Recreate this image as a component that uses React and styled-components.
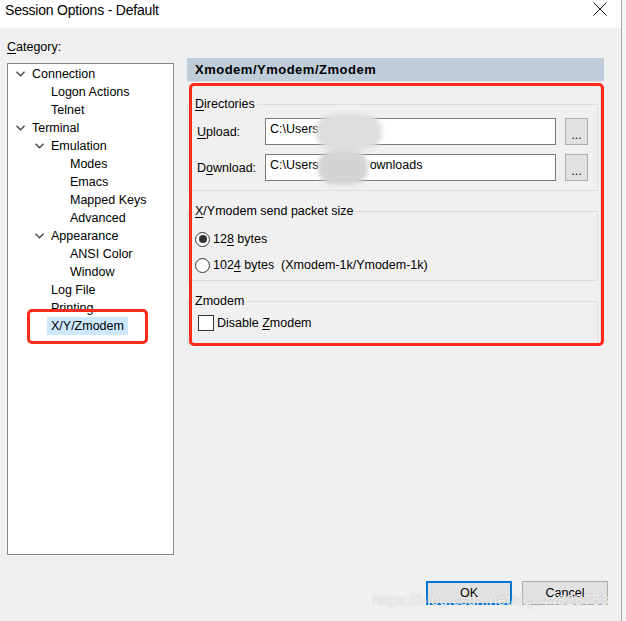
import React from 'react'
import styled, { createGlobalStyle } from 'styled-components'

const GlobalStyle = createGlobalStyle`
  html, body {
    margin: 0;
    padding: 0;
    background: #f4f4f4;
    font-family: "Liberation Sans", Arial, sans-serif;
    font-size: 12px;
    color: #000;
  }
`

const Dialog = styled.div`
  position: relative;
  width: 621px;
  height: 621px;
  background: #f0f0f0;
  border-right: 1px solid #a8a8a8;
  display: flex;
  flex-direction: column;
  overflow: hidden;
`

const TitleBar = styled.div`
  height: 28px;
  background: #fff;
  display: flex;
  align-items: center;
  justify-content: space-between;
  padding: 0 14px 0 5px;
  font-size: 14px;
  letter-spacing: -0.2px;
  flex-shrink: 0;
`

const TitleText = styled.span`
  margin-top: -8px;
`

const CloseBtn = styled.svg`
  width: 14px;
  height: 14px;
  margin-top: -10px;
`

const Body = styled.div`
  display: flex;
  padding-left: 7px;
`

const LeftCol = styled.div`
  width: 167px;
  display: flex;
  flex-direction: column;
  padding-top: 12px;
`

const CategoryLabel = styled.div`
  height: 14px;
  line-height: 14px;
  margin-bottom: 9px;
  font-size: 12.5px;
`

const U = styled.span`
  text-decoration: underline;
  text-underline-offset: 2px;
`

const Tree = styled.div`
  position: relative;
  height: 492px;
  box-sizing: border-box;
  background: #fff;
  border: 1px solid #828790;
  padding-top: 1px;
`

const Row = styled.div`
  height: 18px;
  display: flex;
  align-items: center;
  padding-left: ${p => p.level * 19}px;
`

const Toggle = styled.span`
  width: 24px;
  display: flex;
  justify-content: center;
  flex-shrink: 0;
`

const ItemText = styled.span`
  padding: 0 ${p => (p.selected ? 4 : 0)}px;
  margin-left: ${p => (p.selected ? -4 : 0)}px;
  line-height: 18px;
  font-size: 12.5px;
  background: ${p => (p.selected ? '#cce8ff' : 'transparent')};
`

const Mark = styled.div`
  position: absolute;
  border: 3px solid #ff2a1a;
  border-radius: 5px;
  pointer-events: none;
`

const RightCol = styled.div`
  width: 417px;
  margin-left: 13px;
  padding-top: 30px;
`

const Header = styled.div`
  height: 23px;
  background: #bfcddb;
  display: flex;
  align-items: center;
  padding-left: 8px;
  font-weight: bold;
  font-size: 13px;
  letter-spacing: 0.5px;
`

const Page = styled.div`
  position: relative;
  width: 414px;
  box-sizing: border-box;
  border: 1px solid #e0e0e0;
  border-left: none;
  padding: 14px 2px 0 0;
  height: 265px;
`

const Group = styled.fieldset`
  margin: 0 0 12px 0;
  padding: ${p => p.pad};
  border: 1px solid #dcdcdc;
  min-width: 0;

  &:last-of-type {
    margin-bottom: 0;
  }
`

const Legend = styled.legend`
  padding: 0 2px;
  margin-left: ${p => p.offset}px;
  line-height: 16px;
  font-size: 12.5px;
`

const FieldRow = styled.div`
  display: flex;
  align-items: center;
  height: 27px;
  margin-bottom: ${p => (p.last ? 0 : 9)}px;
`

const FieldLabel = styled.span`
  width: 68px;
  font-size: 12.5px;
`

const PathBox = styled.div`
  position: relative;
  width: 291px;
  height: 27px;
  box-sizing: border-box;
  background: #fff;
  border: 1px solid #7a7a7a;
  padding: 3px 0 0 4px;
  font-size: 12.5px;
  line-height: 14px;
`

const Tail = styled.span`
  margin-left: ${p => p.gap}px;
`

const Blur = styled.div`
  position: absolute;
  left: ${p => p.left}px;
  top: ${p => p.top}px;
  width: ${p => p.w}px;
  height: ${p => p.h}px;
  border-radius: 40%;
  background: ${p => p.bg};
  filter: blur(2px);
`

const BrowseBtn = styled.button`
  width: 23px;
  height: 27px;
  margin-left: 9px;
  box-sizing: border-box;
  background: #e1e1e1;
  border: 1px solid #adadad;
  padding: 6px 0 0;
  font-family: inherit;
  font-size: 12px;
`

const OptRow = styled.label`
  display: flex;
  align-items: center;
  height: ${p => p.h || 22}px;
  margin-bottom: ${p => (p.last ? 0 : 4)}px;
  font-size: 12.5px;
`

const Radio = styled.span`
  width: 15px;
  height: 15px;
  box-sizing: border-box;
  border: 1px solid #333;
  border-radius: 50%;
  background: #fff;
  display: flex;
  align-items: center;
  justify-content: center;
  margin: 0 3px 0 -1px;

  &::after {
    content: '';
    width: 8px;
    height: 8px;
    border-radius: 50%;
    background: ${p => (p.checked ? '#333' : 'transparent')};
  }
`

const Check = styled.span`
  width: 16px;
  height: 16px;
  box-sizing: border-box;
  border: 1px solid #333;
  background: #fff;
  margin-right: 3px;
`

const Footer = styled.div`
  display: flex;
  justify-content: flex-end;
  gap: 10px;
  padding: 26px 13px 0 0;
`

const DlgButton = styled.button`
  width: 86px;
  height: 24px;
  box-sizing: border-box;
  background: #e1e1e1;
  border: ${p => (p.primary ? '2px solid #0078d7' : '1px solid #adadad')};
  font-family: inherit;
  font-size: 12.5px;
  padding: 0;
  color: #000;
`

const Watermark = styled.div`
  position: absolute;
  left: 372px;
  top: 591px;
  font-size: 15px;
  color: rgba(255, 255, 255, 0.85);
  text-shadow: 0 0 1px rgba(120, 120, 120, 0.6);
  letter-spacing: 0.2px;
  pointer-events: none;
`

const Chevron = () => (
  <svg width="9" height="6" viewBox="0 0 9 6">
    <polyline points="0.5,0.8 4.5,4.8 8.5,0.8" fill="none" stroke="#444" strokeWidth="1.3" />
  </svg>
)

const treeItems = [
  { label: 'Connection', level: 0, open: true },
  { label: 'Logon Actions', level: 1 },
  { label: 'Telnet', level: 1 },
  { label: 'Terminal', level: 0, open: true },
  { label: 'Emulation', level: 1, open: true },
  { label: 'Modes', level: 2 },
  { label: 'Emacs', level: 2 },
  { label: 'Mapped Keys', level: 2 },
  { label: 'Advanced', level: 2 },
  { label: 'Appearance', level: 1, open: true },
  { label: 'ANSI Color', level: 2 },
  { label: 'Window', level: 2 },
  { label: 'Log File', level: 1 },
  { label: 'Printing', level: 1 },
  { label: 'X/Y/Zmodem', level: 1, selected: true },
]

const App = () => {
  return (
    <>
      <GlobalStyle />
      <Dialog>
        <TitleBar>
          <TitleText>Session Options - Default</TitleText>
          <CloseBtn viewBox="0 0 14 14">
            <path d="M0.5 0.5 L13.5 13.5 M13.5 0.5 L0.5 13.5" stroke="#111" strokeWidth="1" fill="none" />
          </CloseBtn>
        </TitleBar>
        <Body>
          <LeftCol>
            <CategoryLabel><U>C</U>ategory:</CategoryLabel>
            <Tree>
              {treeItems.map(item => (
                <Row key={item.label} level={item.level}>
                  <Toggle>{item.open && <Chevron />}</Toggle>
                  <ItemText selected={item.selected}>{item.label}</ItemText>
                </Row>
              ))}
              <Mark style={{ left: 19, top: 245, width: 115, height: 29 }} />
            </Tree>
          </LeftCol>
          <RightCol>
            <Header>Xmodem/Ymodem/Zmodem</Header>
            <Page>
              <Group pad="6px 8px 9px 9px">
                <Legend offset={-4}><U>D</U>irectories</Legend>
                <FieldRow>
                  <FieldLabel><U>U</U>pload:</FieldLabel>
                  <PathBox>
                    C:\Users
                    <Blur left={50} top={-6} w={66} h={38} bg="#dedede" />
                  </PathBox>
                  <BrowseBtn>...</BrowseBtn>
                </FieldRow>
                <FieldRow last>
                  <FieldLabel>D<U>o</U>wnload:</FieldLabel>
                  <PathBox>
                    C:\Users<Tail gap={51}>ownloads</Tail>
                    <Blur left={52} top={-5} w={50} h={35} bg="#d4d4d4" />
                  </PathBox>
                  <BrowseBtn>...</BrowseBtn>
                </FieldRow>
              </Group>
              <Group pad="9px 8px 4px 8px">
                <Legend offset={-3}><U>X</U>/Ymodem send packet size</Legend>
                <OptRow>
                  <Radio checked />
                  <span>12<U>8</U> bytes</span>
                </OptRow>
                <OptRow last>
                  <Radio />
                  <span>102<U>4</U> bytes&nbsp;&nbsp;(Xmodem-1k/Ymodem-1k)</span>
                </OptRow>
              </Group>
              <Group pad="5px 8px 11px 10px">
                <Legend offset={-5}>Zmodem</Legend>
                <OptRow last h={18}>
                  <Check />
                  <span>Disable <U>Z</U>modem</span>
                </OptRow>
              </Group>
              <Mark style={{ left: 2, top: 1, width: 409, height: 257 }} />
            </Page>
          </RightCol>
        </Body>
        <Footer>
          <DlgButton primary>OK</DlgButton>
          <DlgButton>Cancel</DlgButton>
        </Footer>
        <Watermark>https://blog.csdn.net/qq_44828753</Watermark>
      </Dialog>
    </>
  )
}

export default App
